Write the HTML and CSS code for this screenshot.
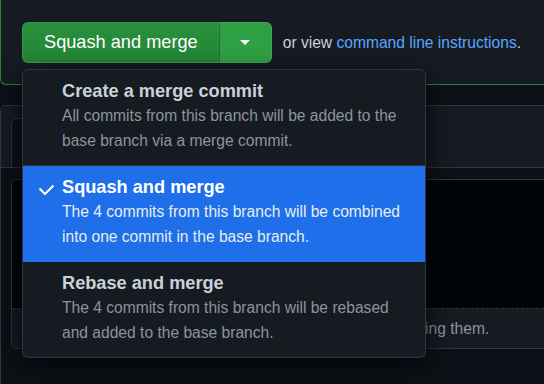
FILE: index.html
```html
<!DOCTYPE html>
<html>

<head>
<meta charset="utf-8">
<link rel="stylesheet" href="styles.css">
</head>

<body>

<div class="merge-panel">
  <div class="merge-actions">
    <div class="btn-group">
      <button class="btn-merge">Squash and merge</button>
      <button class="btn-caret"><span class="caret"></span></button>

      <div class="merge-menu">
        <div class="menu-item">
          <div class="item-icon"></div>
          <div class="item-body">
            <div class="item-title">Create a merge commit</div>
            <div class="item-desc">All commits from this branch will be added to the base branch via a merge commit.</div>
          </div>
        </div>
        <div class="menu-item selected">
          <div class="item-icon">
            <svg class="check" width="16" height="12" viewBox="0 0 16 12">
              <polyline points="0.5,5.5 6,11 14.5,2.5" fill="none" stroke="#fff" stroke-width="2"/>
            </svg>
          </div>
          <div class="item-body">
            <div class="item-title">Squash and merge</div>
            <div class="item-desc">The 4 commits from this branch will be combined into one commit in the base branch.</div>
          </div>
        </div>
        <div class="menu-item">
          <div class="item-icon"></div>
          <div class="item-body">
            <div class="item-title">Rebase and merge</div>
            <div class="item-desc">The 4 commits from this branch will be rebased and added to the base branch.</div>
          </div>
        </div>
      </div>
    </div>
    <span class="alt-text">or view <a href="#">command line instructions</a>.</span>
  </div>
</div>

<div class="form-box">
  <div class="form-head">
    <div class="tab"></div>
  </div>
  <div class="form-body">
    <div class="editor">
      <div class="editor-input"></div>
      <div class="editor-foot">Attach files by dragging &amp; dropping, selecting or pasting them.</div>
    </div>
  </div>
</div>

</body>
</html>
```

FILE: styles.css
```css
body {
	margin: 0;
	height: 384px;
	overflow: hidden;
	background: #0d1117;
	font-family: "Liberation Sans", Arial, sans-serif;
	color: #c9d1d9;
}

a {
	text-decoration: none;
	color: #58a6ff;
}

.merge-panel {
	background: #161b22;
	border-left: 1px solid #238636;
	border-bottom: 1px solid #238636;
	border-bottom-left-radius: 6px;
	padding: 22px 0 21px 21px;
}

.merge-actions {
	display: flex;
	align-items: center;
	gap: 11px;
}

.btn-group {
	position: relative;
	display: flex;
}

.btn-merge {
	font: inherit;
	font-size: 18.2px;
	line-height: 26px;
	padding: 6px 21px 7px;
	color: #fff;
	background: linear-gradient(#29903d, #238636);
	border: 1px solid rgba(240, 246, 252, 0.1);
	border-right: 1px solid rgba(1, 4, 9, 0.15);
	border-radius: 6px 0 0 6px;
}

.btn-caret {
	width: 52px;
	padding: 0;
	display: flex;
	align-items: center;
	justify-content: center;
	background: #2ea043;
	border: 1px solid rgba(240, 246, 252, 0.1);
	border-left: 0;
	border-radius: 0 6px 6px 0;
}

.caret {
	border-top: 5px solid #fff;
	border-left: 5px solid transparent;
	border-right: 5px solid transparent;
}

.alt-text {
	font-size: 15.6px;
	color: #c9d1d9;
}

.merge-menu {
	position: absolute;
	top: 47px;
	left: 0;
	z-index: 10;
	width: 404px;
	box-sizing: border-box;
	background: #161b22;
	border: 1px solid #30363d;
	border-radius: 6px;
	box-shadow: 0 8px 24px rgba(1, 4, 9, 0.85);
	overflow: hidden;
}

.menu-item {
	display: flex;
	padding: 12px 21px 12px 16px;
	border-bottom: 1px solid #30363d;
}

.menu-item:last-child {
	border-bottom: 0;
}

.menu-item.selected {
	background: #1f6feb;
	border-bottom-color: #1f6feb;
}

.item-icon {
	width: 23px;
	flex: none;
}

.check {
	display: block;
	margin-top: 5px;
}

.item-title {
	font-size: 18.2px;
	font-weight: bold;
	line-height: 18px;
	margin-bottom: 3px;
	color: #c9d1d9;
}

.item-desc {
	font-size: 15.6px;
	line-height: 25px;
	color: #8b949e;
}

.selected .item-title {
	color: #fff;
}

.selected .item-desc {
	color: #e6edf3;
}

.form-box {
	margin-top: 20px;
	border-top: 1px solid #30363d;
	border-left: 1px solid #30363d;
	border-top-left-radius: 6px;
	overflow: hidden;
}

.form-head {
	background: #161b22;
	padding: 12px 0 0 10px;
	border-bottom: 1px solid #30363d;
}

.tab {
	width: 100px;
	height: 49px;
	box-sizing: border-box;
	background: #0d1117;
	border: 1px solid #30363d;
	border-bottom: 0;
	border-radius: 6px 6px 0 0;
}

.form-body {
	padding: 11px 0 60px 10px;
}

.editor {
	border: 1px solid #30363d;
	border-right: 0;
	border-radius: 6px 0 0 6px;
	overflow: hidden;
}

.editor-input {
	height: 128px;
	background: #010409;
}

.editor-foot {
	border-top: 1px dashed #30363d;
	background: #161b22;
	padding-left: 49px;
	font-size: 15.6px;
	line-height: 39px;
	color: #8b949e;
	white-space: nowrap;
}
```
